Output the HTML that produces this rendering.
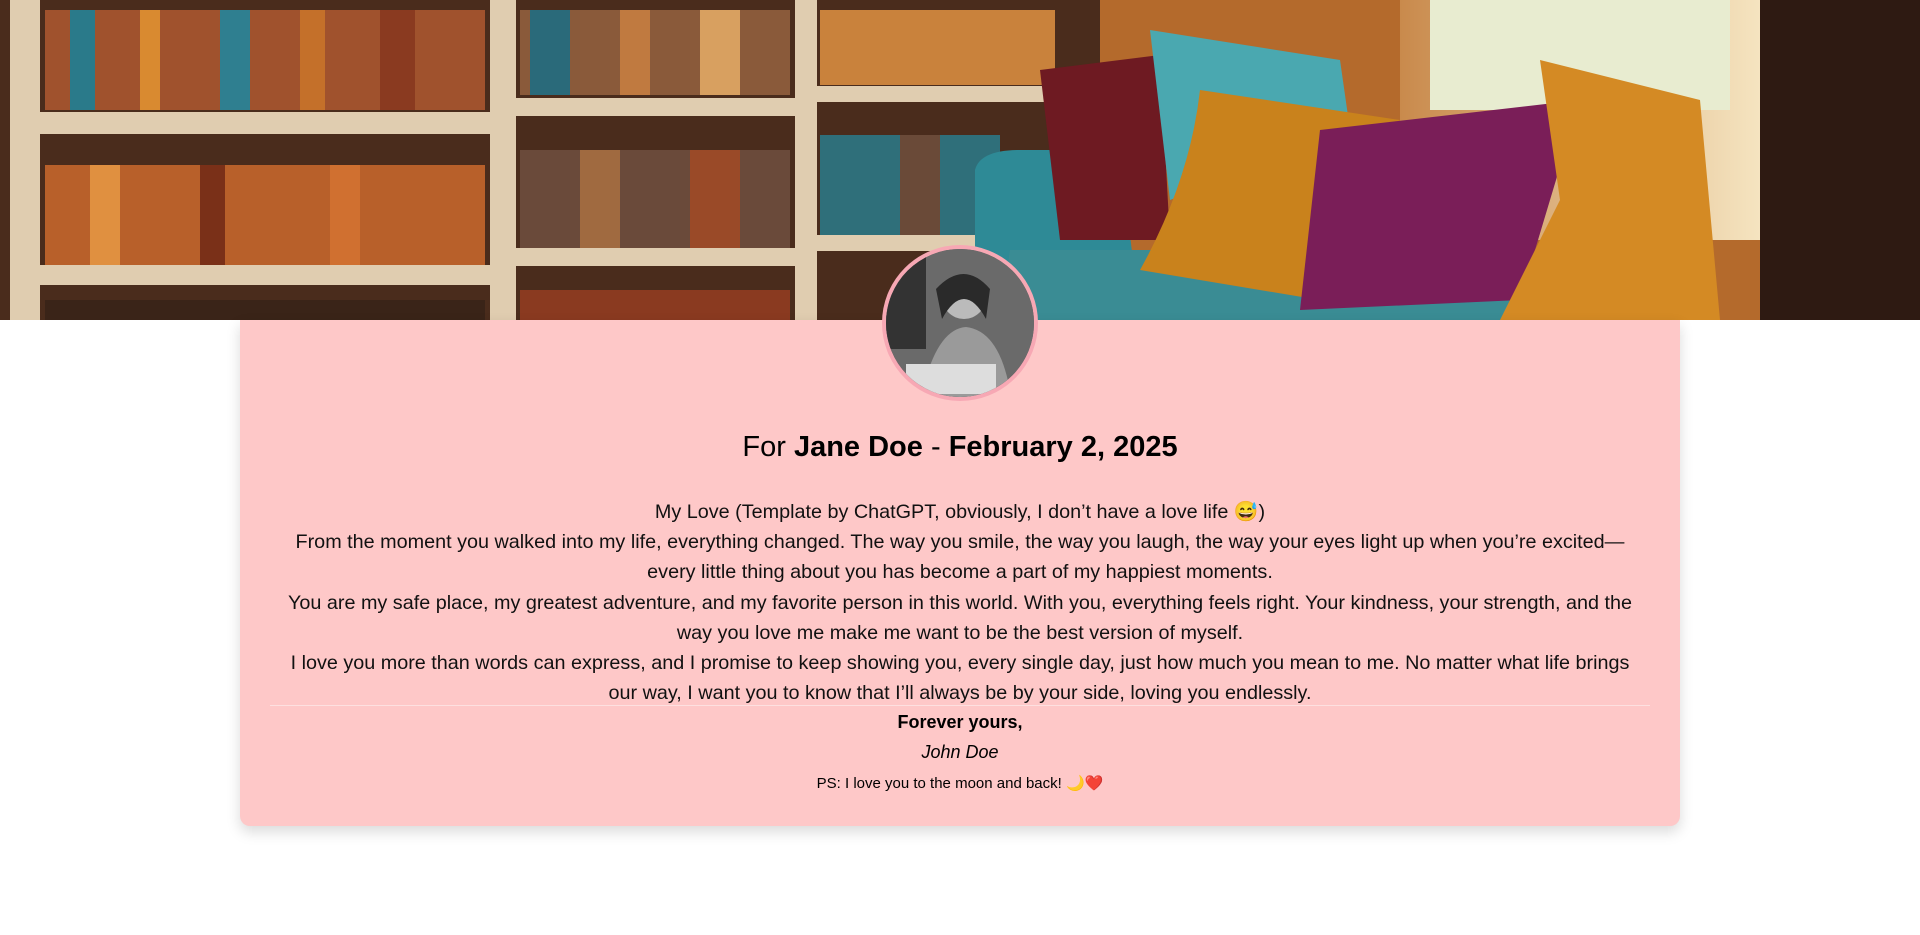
<!DOCTYPE html>
<html><head><meta charset="utf-8"><style>
*{margin:0;padding:0;box-sizing:border-box}
body{width:1920px;height:935px;background:#fff;font-family:"Liberation Sans",sans-serif;overflow:hidden;position:relative}
.hero{position:absolute;left:0;top:0;width:1920px;height:320px;overflow:hidden;background:#3a2418}
.card{position:absolute;left:240px;top:320px;width:1440px;height:506px;background:#fec8c8;border-radius:0 0 10px 10px;box-shadow:0 6px 14px rgba(0,0,0,.15)}
.av{position:absolute;left:882px;top:245px;width:156px;height:156px;border-radius:50%;border:4px solid #f7a8b4;background:#555;overflow:hidden}
h1{position:absolute;left:0;width:1440px;top:111px;text-align:center;font-weight:normal;font-size:29px;color:#000}
.txt{position:absolute;left:0;width:1440px;top:177px;text-align:center;font-size:19.8px;line-height:30.2px;color:#111;white-space:nowrap}
.hr{position:absolute;left:30px;width:1380px;top:385px;height:1px;background:#fde0e0}
.s{position:absolute;left:0;width:1440px;text-align:center;color:#000}
</style></head><body>
<div class="hero">
<svg width="1920" height="320" viewBox="0 0 1920 320">
<defs>
<linearGradient id="w" x1="0" x2="1"><stop offset="0" stop-color="#c98a4c"/><stop offset="1" stop-color="#f5e4c0"/></linearGradient>
</defs>
<rect width="1920" height="320" fill="#4a2c1c"/>
<rect x="1100" y="0" width="820" height="320" fill="#b46a2c"/>
<rect x="1400" y="0" width="360" height="240" fill="url(#w)"/>
<rect x="1430" y="0" width="300" height="110" fill="#e8ecd0"/>
<rect x="1760" y="0" width="160" height="320" fill="#2e1a12"/>
<g fill="#e0cdb0">
<rect x="10" y="0" width="30" height="320"/><rect x="490" y="0" width="26" height="320"/><rect x="795" y="0" width="22" height="320"/>
<rect x="40" y="112" width="450" height="22"/><rect x="516" y="98" width="280" height="18"/><rect x="817" y="86" width="240" height="16"/>
<rect x="40" y="265" width="450" height="20"/><rect x="516" y="248" width="280" height="18"/><rect x="817" y="235" width="240" height="16"/>
</g>
<g>
<rect x="45" y="10" width="440" height="100" fill="#a0522d"/>
<rect x="70" y="10" width="25" height="100" fill="#2a7a8a"/><rect x="140" y="10" width="20" height="100" fill="#d98a30"/><rect x="220" y="10" width="30" height="100" fill="#2f7f90"/><rect x="300" y="10" width="25" height="100" fill="#c4702a"/><rect x="380" y="10" width="35" height="100" fill="#8a3a20"/>
<rect x="45" y="165" width="440" height="100" fill="#b8602a"/>
<rect x="90" y="165" width="30" height="100" fill="#e09040"/><rect x="200" y="165" width="25" height="100" fill="#7a3018"/><rect x="330" y="165" width="30" height="100" fill="#d07030"/>
<rect x="520" y="10" width="270" height="85" fill="#8a5a3a"/>
<rect x="530" y="10" width="40" height="85" fill="#2a6a7a"/><rect x="620" y="10" width="30" height="85" fill="#c07a40"/><rect x="700" y="10" width="40" height="85" fill="#d8a060"/>
<rect x="520" y="150" width="270" height="98" fill="#6a4a3a"/><rect x="580" y="150" width="40" height="98" fill="#a06a40"/><rect x="690" y="150" width="50" height="98" fill="#9a4a28"/>
<rect x="820" y="10" width="235" height="75" fill="#c9823c"/><rect x="820" y="135" width="180" height="100" fill="#2f6f7a"/><rect x="900" y="135" width="40" height="100" fill="#6a4a38"/>
<rect x="520" y="290" width="270" height="30" fill="#8a3a20"/><rect x="45" y="300" width="440" height="20" fill="#3a2418"/>
</g>
<path d="M975 170 Q980 150 1020 150 L1120 150 L1140 320 L975 320Z" fill="#2e8a96"/>
<path d="M1010 250 L1500 250 L1520 320 L1000 320Z" fill="#3a8c94"/>
<path d="M1040 70 L1160 55 L1170 240 L1060 240Z" fill="#6e1a22"/>
<path d="M1150 30 L1340 60 L1350 130 L1170 200Z" fill="#4aa8b0"/>
<path d="M1200 90 L1400 120 L1320 300 L1140 270 Q1190 180 1200 90Z" fill="#c9821c"/>
<path d="M1320 130 L1580 100 L1520 300 L1300 310Z" fill="#7a1e58"/>
<path d="M1540 60 L1700 100 L1720 320 L1500 320 L1560 200Z" fill="#d48a24"/>
</svg>
</div>
<div class="card">
<h1>For <b>Jane Doe</b> - <b>February 2, 2025</b></h1>
<div class="txt">My Love (Template by ChatGPT, obviously, I don’t have a love life 😅)<br>From the moment you walked into my life, everything changed. The way you smile, the way you laugh, the way your eyes light up when you’re excited—<br>every little thing about you has become a part of my happiest moments.<br>You are my safe place, my greatest adventure, and my favorite person in this world. With you, everything feels right. Your kindness, your strength, and the<br>way you love me make me want to be the best version of myself.<br>I love you more than words can express, and I promise to keep showing you, every single day, just how much you mean to me. No matter what life brings<br>our way, I want you to know that I’ll always be by your side, loving you endlessly.</div>
<div class="hr"></div>
<div class="s" style="top:392px;font-size:18px;font-weight:bold">Forever yours,</div>
<div class="s" style="top:422px;font-size:18px;font-style:italic">John Doe</div>
<div class="s" style="top:454px;font-size:15px">PS: I love you to the moon and back! 🌙❤️</div>
</div>
<div class="av"><svg width="148" height="148"><rect width="148" height="148" fill="#6a6a6a"/><rect x="0" y="0" width="40" height="100" fill="#333"/><circle cx="78" cy="48" r="22" fill="#bbb"/><path d="M50 40 Q78 10 104 40 L100 70 Q78 30 56 70Z" fill="#2a2a2a"/><path d="M35 148 Q50 80 80 78 Q115 82 125 148Z" fill="#9a9a9a"/><rect x="20" y="115" width="90" height="30" fill="#ddd"/></svg></div>
</body></html>
